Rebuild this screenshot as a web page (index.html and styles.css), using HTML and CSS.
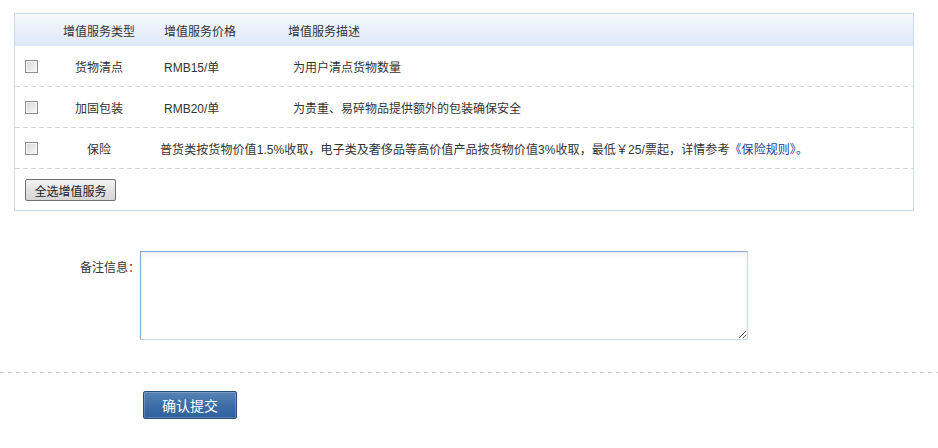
FILE: index.html
```html
<!DOCTYPE html>
<html lang="zh-CN">
<head>
    <meta charset="UTF-8">
    <title>增值服务</title>
    <link rel="stylesheet" href="styles.css">
</head>
<body>
    <div class="service-panel">
        <div class="svc-row svc-head">
            <div class="col-check"></div>
            <div class="col-type">增值服务类型</div>
            <div class="col-price">增值服务价格</div>
            <div class="col-desc head-desc">增值服务描述</div>
        </div>

        <div class="svc-row">
            <div class="col-check"><input type="checkbox" class="svc-check"></div>
            <div class="col-type">货物清点</div>
            <div class="col-price">RMB15/单</div>
            <div class="col-desc">为用户清点货物数量</div>
        </div>

        <div class="svc-row">
            <div class="col-check"><input type="checkbox" class="svc-check"></div>
            <div class="col-type">加固包装</div>
            <div class="col-price">RMB20/单</div>
            <div class="col-desc">为贵重、易碎物品提供额外的包装确保安全</div>
        </div>

        <div class="svc-row">
            <div class="col-check"><input type="checkbox" class="svc-check"></div>
            <div class="col-type">保险</div>
            <div class="col-wide">普货类按货物价值1.5%收取，电子类及奢侈品等高价值产品按货物价值3%收取，最低￥25/票起，详情参考<a href="#" class="rule-link">《保险规则》。</a></div>
        </div>

        <div class="panel-foot">
            <button class="btn-select-all">全选增值服务</button>
        </div>
    </div>

    <div class="remark-row">
        <label class="remark-label">备注信息：</label>
        <textarea class="remark-input"></textarea>
    </div>

    <div class="submit-bar">
        <button class="btn-submit">确认提交</button>
    </div>
</body>
</html>
```

FILE: styles.css
```css
* {
    margin: 0;
    padding: 0;
    box-sizing: border-box;
}

body {
    font-family: "Liberation Sans", "Noto Sans CJK SC", sans-serif;
    font-size: 12px;
    color: #333;
    background: #fff;
    width: 938px;
}

/* service table */
.service-panel {
    margin: 13px 0 0 14px;
    width: 900px;
    border: 1px solid #c9daf0;
}

.svc-row {
    display: flex;
    align-items: center;
    height: 41px;
    padding-bottom: 1px;
    background-image: repeating-linear-gradient(to right, #d9d9d9 0 5px, transparent 5px 8px);
    background-size: 100% 1px;
    background-repeat: no-repeat;
    background-position: left bottom;
}

.svc-head {
    height: 32px;
    padding-bottom: 0;
    background: linear-gradient(#f6f9fe, #dce8f8);
}

.col-check {
    width: 35px;
    padding-left: 10px;
    display: flex;
    align-items: center;
}

.col-type {
    width: 98px;
    text-align: center;
}

.col-price {
    width: 125px;
    padding-left: 16px;
}

.col-desc {
    padding-left: 20px;
}

.head-desc {
    padding-left: 15px;
}

.col-wide {
    padding-left: 12px;
    white-space: nowrap;
    letter-spacing: 0.08px;
}

.svc-check {
    appearance: none;
    width: 13px;
    height: 13px;
    border: 1px solid #8e8f8f;
    background: linear-gradient(135deg, #d6d6d6, #fafafa);
    box-shadow: inset 0 0 0 1px #f4f4f4;
}

.rule-link {
    color: #1c3f94;
    text-decoration: none;
}

.panel-foot {
    padding: 10px 10px 9px;
}

.btn-select-all {
    font-family: inherit;
    font-size: 12px;
    color: #222;
    width: 91px;
    height: 22px;
    border: 1px solid #707070;
    border-radius: 2px;
    background: linear-gradient(#f4f4f4, #e2e2e2 50%, #d6d6d6);
}

/* remark */
.remark-row {
    display: flex;
    margin-top: 40px;
}

.remark-label {
    width: 140px;
    padding: 7px 0 0 0;
    text-align: right;
}

.remark-input {
    width: 608px;
    height: 89px;
    border: 1px solid #c5daed;
    border-top-color: #8aa8c8;
    border-left-color: #8aa8c8;
    box-shadow: inset 0 3px 4px rgba(0, 0, 0, 0.06);
    resize: both;
    outline: none;
}

.submit-bar {
    margin-top: 32px;
    padding: 19px 0 0 143px;
    background-image: repeating-linear-gradient(to right, #cccccc 0 4px, transparent 4px 8px);
    background-size: 100% 1px;
    background-repeat: no-repeat;
}

.btn-submit {
    font-family: inherit;
    font-size: 14px;
    color: #fff;
    width: 94px;
    height: 28px;
    border: 1px solid #2a4d78;
    border-radius: 2px;
    background: linear-gradient(#5884b4, #3d6ea6 50%, #2e609b);
    box-shadow: inset 0 0 0 1px rgba(255, 255, 255, 0.2);
}
```
